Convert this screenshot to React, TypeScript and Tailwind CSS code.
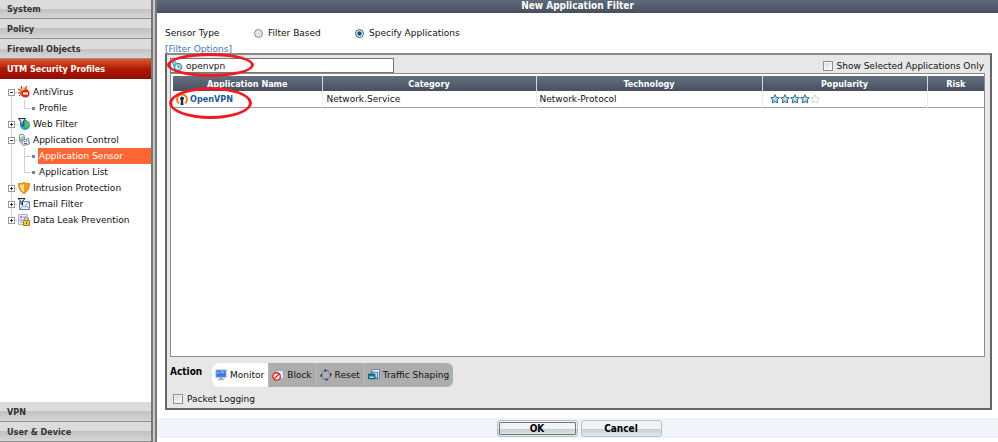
import React, { useState } from 'react';

interface TreeItem {
  name: string;
  icon: React.ReactNode;
  open?: boolean;
  children?: string[];
}

const VirusIcon = () => (
  <svg width="12" height="12" viewBox="0 0 12 12">
    <path d="M0 3l3 1M3 0l1 3M9 0L7 3M0 7h2M1 10l2-2" stroke="#6b3d16" strokeWidth="1" fill="none" />
    <circle cx="6" cy="6" r="4.500" fill="#e8731f" />
    <path d="M3 4l2-2 2 1-2 2z" fill="#ffd77a" />
    <circle cx="7.500" cy="7.500" r="4" fill="#dc2a1e" />
    <path d="M5 7.500h5" stroke="#fff" strokeWidth="2" />
  </svg>
);

const WebIcon = () => (
  <svg width="12" height="12" viewBox="0 0 12 12">
    <circle cx="7" cy="7" r="5" fill="#2596cf" />
    <path d="M7 3l3 0c2 2 2 4 1 5-2 0-1 2-3 2-2-1 0-2-1-3z" fill="#5cc04f" />
    <path d="M3.500 9c1 0 2 1 2 2.500L4 10.500z" fill="#5cc04f" />
    <path d="M.5.500h7L5 4v4L3 6.500V4z" fill="#d9e4ea" stroke="#1e2e38" />
  </svg>
);

const AppIcon = () => (
  <svg width="12" height="12" viewBox="0 0 12 12">
    <path d="M1.500.500h4l1 2v4h-5z" fill="#eef3e8" stroke="#8a979e" />
    <path d="M3 3v3M5 2v4" stroke="#57b35a" />
    <path d="M1.500 7l9-2.500 1 5.500-6 1.500z" fill="#dce4e8" stroke="#75848d" />
    <path d="M4 8h1M6 7.500h1M8 7h1M6 9.500h3" stroke="#3f6f96" />
  </svg>
);

const ShieldIcon = () => (
  <svg width="12" height="12" viewBox="0 0 12 12">
    <path d="M6 .5c2 1 3.500 1 5.500 1 0 5-1.500 8-5.500 10C2 9.500.5 6.500.5 1.500c2 0 3.500 0 5.500-1z" fill="#f39c1e" stroke="#d08a1c" />
    <path d="M6 2v8C3 8.500 2 6 2 3c1.500 0 3-.5 4-1z" fill="#ffe291" />
  </svg>
);

const MailIcon = () => (
  <svg width="12" height="12" viewBox="0 0 12 12">
    <path d="M1.500 3.500h10v8h-10z" fill="#edf3fc" stroke="#5f7fae" />
    <path d="M2 11l3-3 2 1 2-1 2.500 3M11 4L7 8" fill="none" stroke="#8aa5cc" />
    <path d="M0 .5h7L4.500 3.500V7L3 6V3.500z" fill="#dfe6ea" stroke="#1d2a33" />
  </svg>
);

const LeakIcon = () => (
  <svg width="12" height="12" viewBox="0 0 12 12">
    <path d="M.5.500h9v10h-9z" fill="#dfe8fb" stroke="#a9b9df" />
    <path d="M2 2h2v2H2z" fill="#e07a7a" />
    <path d="M5 3h3M2 6h3M2 8h2" stroke="#7d9be0" />
    <path d="M6.500 7V5.500a2 2 0 0 1 4 0V7" fill="none" stroke="#a57c1c" />
    <path d="M5.500 6.500h6v5h-6z" fill="#f8c840" stroke="#a57c1c" />
    <path d="M8 8h1v2H8z" fill="#7a5a08" />
  </svg>
);

const MonitorIcon = () => (
  <svg width="12" height="12" viewBox="0 0 13 13">
    <path d="M1 1h11v8H1z" fill="#3c78e0" stroke="#9db7dd" />
    <path d="M2 3h3v2H2zM6 2h4v3H6z" fill="#79aaf5" />
    <path d="M5 9.500h3v1.500H5z" fill="#8c99ab" />
    <path d="M3 11.500h7" stroke="#a4afbd" strokeWidth="1.500" />
  </svg>
);

const BlockIcon = () => (
  <svg width="12" height="12" viewBox="0 0 13 13">
    <path d="M4.500 1.500h8v9h-8z" fill="#e3ecfb" stroke="#8ba3cf" />
    <circle cx="5" cy="8" r="4" fill="#fff" stroke="#dc2419" strokeWidth="1.500" />
    <path d="M2.500 10.500l5-5" stroke="#dc2419" strokeWidth="1.500" />
  </svg>
);

const ResetIcon = () => (
  <svg width="12" height="12" viewBox="0 0 13 13">
    <circle cx="6.500" cy="6.500" r="4.800" fill="none" stroke="#3e5b96" strokeWidth="1" strokeDasharray="3 1.500" />
    <path d="M5 0l3 1.500L5 3zM8 13l-3-1.500L8 10zM0 8l1.500-3L3 8zM13 5l-1.500 3L10 5z" fill="#26334f" />
  </svg>
);

const ShapingIcon = () => (
  <svg width="12" height="12" viewBox="0 0 13 13">
    <path d="M4.500.500h8v10h-8z" fill="#e7effa" stroke="#5a7cab" />
    <path d="M3.500 3.500h7v6h-7z" fill="#cfe0f3" stroke="#3c6494" />
    <path d="M.5 5.500h7v5h-7z" fill="#35b3b3" stroke="#154e5e" />
    <path d="M1 6.500h6" stroke="#123f4c" />
    <path d="M2 9h4" stroke="#bdeef0" />
  </svg>
);

const OpenVpnIcon = () => (
  <svg width="12" height="12" viewBox="0 0 12 12" className="shrink-0">
    <path d="M3 10.500A5 5 0 1 1 9 10.500" fill="none" stroke="#ee7f1b" strokeWidth="2" />
    <circle cx="6" cy="5.500" r="2" fill="#17315c" />
    <path d="M5 6h2l.5 6h-3z" fill="#17315c" />
  </svg>
);

const SearchIcon = () => (
  <svg width="12" height="12" viewBox="0 0 12 12" className="shrink-0">
    <path d="M1 2l3-1 2 3-3 3z" fill="#9cc7dc" stroke="#6aa3bd" />
    <circle cx="7" cy="7" r="3.500" fill="#e7f6fc" stroke="#3f97bb" strokeWidth="1.500" />
    <path d="M7 5v2h2" fill="none" stroke="#2e7496" />
  </svg>
);

const Star = ({ filled }: { filled: boolean }) => (
  <svg width="10" height="10" viewBox="0 0 10 10">
    <path
      d="M5 .7l1.300 2.700 3 .4-2.200 2.100.6 3L5 7.500 2.300 8.900l.6-3L.7 3.800l3-.4z"
      fill={filled ? '#a5e0fa' : '#fff'}
      stroke={filled ? '#3f6477' : '#d5d5d5'}
    />
  </svg>
);

// Hand drawn red ring used to highlight a field
const Ring = ({ className }: { className: string }) => (
  <span className={`pointer-events-none absolute z-10 rounded-[50%] border-3 border-[#ed1c24] ${className}`} />
);

const tree: TreeItem[] = [
  { name: 'AntiVirus', icon: <VirusIcon />, open: true, children: ['Profile'] },
  { name: 'Web Filter', icon: <WebIcon /> },
  { name: 'Application Control', icon: <AppIcon />, open: true, children: ['Application Sensor', 'Application List'] },
  { name: 'Intrusion Protection', icon: <ShieldIcon /> },
  { name: 'Email Filter', icon: <MailIcon /> },
  { name: 'Data Leak Prevention', icon: <LeakIcon /> },
];

const actions = [
  { name: 'Monitor', icon: <MonitorIcon /> },
  { name: 'Block', icon: <BlockIcon /> },
  { name: 'Reset', icon: <ResetIcon /> },
  { name: 'Traffic Shaping', icon: <ShapingIcon /> },
];

// bold labels use the narrower cut
const boldClass = "font-['DejaVu_Sans_Condensed','DejaVu_Sans',sans-serif] font-bold";
const radioClass =
  'size-[9px] appearance-none rounded-full border border-[#8b8b8b] bg-[#e4e4e4] checked:border-[#4d6475] checked:bg-[radial-gradient(circle,#0f4f7c_0_35%,#d8ecf5_50%)]';
const checkClass =
  'size-[10px] appearance-none border border-[#8e8f8f] bg-linear-to-br from-[#cfd3d8] to-white outline-1 -outline-offset-2 outline-[#f4f4f4] checked:bg-[#2f6b9a]';
const thClass = `h-[15px] border-r border-[#d4d8dc] bg-linear-to-b from-[#647080] to-[#48505f] p-0 text-center leading-[14px] text-white last:border-r-0 ${boldClass}`;
const buttonClass = `h-[17px] w-[81px] rounded-[3px] border border-[#b9bfc3] bg-linear-to-b from-[#f1f3f4] from-50% via-[#c3cdd2] via-50% to-[#e3eaed] text-center text-[10px] text-black ${boldClass}`;

const MenuButton = ({ label, active, first }: { label: string; active?: boolean; first?: boolean }) => (
  <button
    type="button"
    className={`block w-full shrink-0 border-b pl-[7px] text-left ${boldClass} ${first ? 'h-[19px]' : 'h-5'} ${
      active
        ? 'border-[#8a1000] bg-linear-to-b from-[#e2552b] via-[#b01a05] via-50% to-[#980c00] text-white'
        : 'border-[#8f8f8f] bg-linear-to-b from-[#dcdcdc] from-50% via-[#c2c2c2] via-50% to-[#d6d6d6] text-[#333]'
    }`}
  >
    {label}
  </button>
);

const Sidebar = () => {
  const [selected, setSelected] = useState('Application Sensor');

  return (
    <nav className="flex w-[151px] shrink-0 flex-col bg-white">
      <MenuButton label="System" first />
      <MenuButton label="Policy" />
      <MenuButton label="Firewall Objects" />
      <MenuButton label="UTM Security Profiles" active />

      <ul className="flex-1 pt-[5px]">
        {tree.map((item, index) => (
          <li key={item.name} className="relative">
            {index < tree.length - 1 && <span className="absolute top-2 -bottom-2 left-[11px] border-l border-[#d0d0d0]" />}
            <div className="flex h-4 items-center">
              <button
                type="button"
                aria-label={`Toggle ${item.name}`}
                className="relative ml-2 flex size-[7px] items-center justify-center border border-[#9a9a9a] bg-white"
              >
                <span className="h-px w-[3px] bg-[#333]" />
                {!item.open && <span className="absolute h-[3px] w-px bg-[#333]" />}
              </button>
              <span className="mr-px h-px w-[2px] bg-[#d0d0d0]" />
              {item.icon}
              <a href="#" className="ml-[3px]">
                {item.name}
              </a>
            </div>
            {item.children && (
              <ul>
                {item.children.map((child, i) => (
                  <li key={child} className="relative flex h-4 items-center pl-6">
                    <span
                      className={`absolute top-0 left-6 border-l border-[#d0d0d0] ${i < item.children!.length - 1 ? 'h-4' : 'h-2'}`}
                    />
                    <span className="h-px w-[7px] bg-[#d0d0d0]" />
                    <span className="mx-px size-[3px] bg-[#7486a8]" />
                    <a
                      href="#"
                      onClick={() => setSelected(child)}
                      className={`ml-[2px] h-4 flex-1 pl-px leading-4 ${child === selected ? 'bg-[#ff6633] text-white' : ''}`}
                    >
                      {child}
                    </a>
                  </li>
                ))}
              </ul>
            )}
          </li>
        ))}
      </ul>

      <MenuButton label="VPN" />
      <MenuButton label="User &amp; Device" />
    </nav>
  );
};

const App = () => {
  const [search, setSearch] = useState('openvpn');
  const [action, setAction] = useState('Monitor');

  return (
    <div className="flex min-h-screen bg-white font-['DejaVu_Sans',sans-serif] text-[9px] leading-4 text-[#111]">
      <Sidebar />
      <div className="w-[6px] shrink-0 border-x-2 border-[#777] bg-[#c9c9c9]" />

      <form className="flex min-w-0 flex-1 flex-col" onSubmit={(e) => e.preventDefault()}>
        <h1 className={`h-[13px] bg-linear-to-b from-[#5f6b7a] to-[#484f5f] text-center text-[10px] leading-3 text-white ${boldClass}`}>
          New Application Filter
        </h1>

        <fieldset className="mt-3 flex h-4 items-center pl-2">
          <legend className="float-left w-[89px]">Sensor Type</legend>
          <label className="flex w-[101px] items-center gap-[5px]">
            <input type="radio" name="sensor" className={radioClass} />
            Filter Based
          </label>
          <label className="flex items-center gap-[5px]">
            <input type="radio" name="sensor" defaultChecked className={radioClass} />
            Specify Applications
          </label>
        </fieldset>
        <a href="#" className="h-3 self-start pl-2 text-[#3f76b5]">
          [Filter Options]
        </a>

        <section className="mr-[6px] ml-2 flex flex-1 flex-col border-2 border-t-[#8a8a8a] border-r-[#666] border-b-[#666] border-l-[#666] bg-[#e7e7e7] px-[3px] pt-[3px]">
          <div className="flex h-[15px] items-center justify-between">
            <div className="relative flex h-[15px] w-[224px] items-center border border-[#777] bg-white">
              <SearchIcon />
              <input
                aria-label="Search applications"
                type="text"
                value={search}
                onChange={(e) => setSearch(e.target.value)}
                className="min-w-0 flex-1 pl-[3px] outline-none"
              />
              <Ring className="-top-[6px] -left-1 h-6 w-[87px]" />
            </div>
            <label className="flex items-center gap-1 pr-[3px]">
              <input type="checkbox" className={checkClass} />
              Show Selected Applications Only
            </label>
          </div>

          <div className="mr-[2px] flex-1 border border-[#8d8d8d] bg-white pt-[2px] pl-[2px]">
            <table className="w-full table-fixed border-collapse">
              <thead>
                <tr>
                  <th className={`${thClass} w-[149px]`}>Application Name</th>
                  <th className={`${thClass} w-[214px]`}>Category</th>
                  <th className={thClass}>Technology</th>
                  <th className={`${thClass} w-[165px]`}>Popularity</th>
                  <th className={`${thClass} w-[57px]`}>Risk</th>
                </tr>
              </thead>
              <tbody>
                <tr className="border-b border-[#a0a0a0]">
                  <td className="relative border-r border-[#ececec] p-0">
                    <a href="#" className={`flex items-center gap-[2px] pl-[3px] text-[#1d5a96] ${boldClass}`}>
                      <OpenVpnIcon />
                      OpenVPN
                    </a>
                    <Ring className="-top-1 -left-1 h-8 w-[83px]" />
                  </td>
                  <td className="border-r border-[#ececec] p-0 pl-1">Network.Service</td>
                  <td className="border-r border-[#ececec] p-0 pl-[3px]">Network-Protocol</td>
                  <td className="border-r border-[#ececec] p-0 pl-[7px]">
                    <span className="flex items-center">
                      {[1, 2, 3, 4, 5].map((n) => (
                        <Star key={n} filled={n <= 4} />
                      ))}
                    </span>
                  </td>
                  <td className="p-0" />
                </tr>
              </tbody>
            </table>
          </div>

          <div className="mt-[6px] flex h-6">
            <span className={`w-[42px] text-[10px] leading-[18px] text-black ${boldClass}`}>Action</span>
            <div className="flex overflow-hidden rounded-[6px] bg-[#adadad]">
              {actions.map((item) => (
                <button
                  key={item.name}
                  type="button"
                  onClick={() => setAction(item.name)}
                  className={`flex items-center gap-[3px] border-r border-[#b9b9b9] pr-1 pl-[3px] last:border-r-0 ${action === item.name ? 'bg-white' : ''}`}
                >
                  {item.icon}
                  {item.name}
                </button>
              ))}
            </div>
          </div>
          <label className="mt-1 mb-px flex h-4 items-center gap-1 self-start pl-[3px]">
            <input type="checkbox" className={checkClass} />
            Packet Logging
          </label>
        </section>

        <div className="mt-2 mb-1 flex h-5 items-center justify-center gap-[3px] bg-[#f0f4fa] pl-[3px]">
          <button type="submit" className={`${buttonClass} outline-1 -outline-offset-3 outline-[#777]`}>
            OK
          </button>
          <button type="button" className={buttonClass}>
            Cancel
          </button>
        </div>
      </form>
    </div>
  );
};

export default App;
